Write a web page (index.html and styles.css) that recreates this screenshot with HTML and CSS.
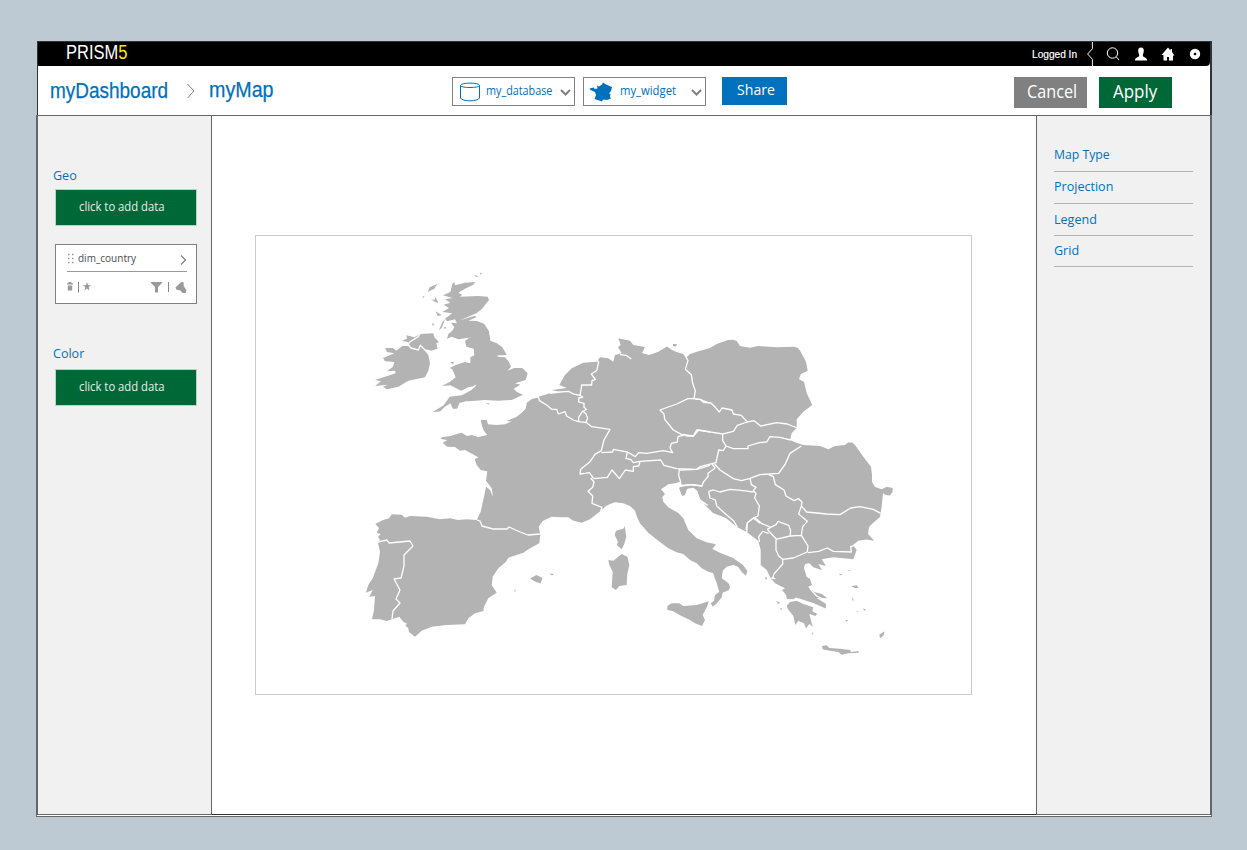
FILE: index.html
```html
<!DOCTYPE html>
<html lang="en">
<head>
<meta charset="utf-8">
<title>PRISM5 – myMap</title>
<link rel="stylesheet" href="styles.css">
</head>
<body>
<div class="window">
  <div class="head">
    <div class="topbar">
      <div class="logo"><span class="fit fit-logo">PRISM<b>5</b></span></div>
      <div class="user">
        <span class="logged"><span class="fit fit-logged">Logged In</span></span>
        <svg class="notch" width="10" height="25" viewBox="0 0 10 25"><path d="M7.500 0V7L2.500 12.500L7.500 18V25" fill="none" stroke="#fff"/></svg>
        <svg class="ico-search" width="16" height="16" viewBox="0 0 16 16"><circle cx="7.500" cy="7" r="5.200" fill="none" stroke="#fff"/><path d="M11.300 10.800L14 14" stroke="#fff"/></svg>
        <svg class="ico-user" width="14" height="14" viewBox="0 0 14 14"><path d="M7 .5C5 .5 4 2 4.200 4C4.300 6 5.200 7 5.200 8.500C5 10.500 1 10 1 13.500H13C13 10 9 10.500 8.800 8.500C8.800 7 9.700 6 9.800 4C10 2 9 .5 7 .5Z" fill="#fff"/></svg>
        <svg class="ico-home" width="14" height="14" viewBox="0 0 14 14"><path d="M7 .5L.5 8H2.500V13.500H6V10H8V13.500H12V8.500H13.500L11 5V2H9.500V3.500Z" fill="#fff"/></svg>
        <svg class="ico-gear" width="12" height="12" viewBox="0 0 12 12"><circle cx="6" cy="6" r="5.200" fill="#fff"/><circle cx="6" cy="6" r="1.300"/></svg>
      </div>
    </div>
    <div class="toolbar">
      <div class="crumb crumb-a"><span class="fit fit-dash">myDashboard</span></div>
      <svg class="crumb-sep" width="10" height="16" viewBox="0 0 10 16"><path d="M1.500 1L8 8L1.500 15" fill="none" stroke="#808080"/></svg>
      <div class="crumb crumb-b"><span class="fit fit-map">myMap</span></div>
      <div class="select">
        <svg class="sel-icon" width="22" height="20" viewBox="0 0 22 20"><path d="M1.500 3.500C1.500 .3 20.500 .3 20.500 3.500C20.500 6.200 1.500 6.200 1.500 3.500V16C3 19.800 19 19.800 20.500 16V3.500" fill="none" stroke="#0071bc"/></svg>
        <span class="sel-text"><span class="fit fit-db">my_database</span></span>
        <svg class="chev" width="11" height="9" viewBox="0 0 11 9"><path d="M1 2L5.500 6.500L10 2" fill="none" stroke="#808080" stroke-width="2"/></svg>
      </div>
      <div class="select select-w">
        <svg class="sel-icon sel-fr" width="24" height="20" viewBox="0 0 24 20"><path d="M.5 6.500L5 5.500L5.500 7L8.500 6.500L8 3.500L10 4.500L13 2.500L14 .5L17 2.500L23 5L22 9L20 11.500L21.500 12L21 15L22 16.500L18 18L14 17.500L13 19.500L10 18.500L5.500 17L7 13L6 10L1.500 8Z" fill="#0071bc"/></svg>
        <span class="sel-text"><span class="fit fit-wd">my_widget</span></span>
        <svg class="chev" width="11" height="9" viewBox="0 0 11 9"><path d="M1 2L5.500 6.500L10 2" fill="none" stroke="#808080" stroke-width="2"/></svg>
      </div>
      <div class="btn btn-share"><span class="fit fit-share">Share</span></div>
      <div class="btn btn-cancel"><span class="fit fit-cancel">Cancel</span></div>
      <div class="btn btn-apply"><span class="fit fit-apply">Apply</span></div>
    </div>
  </div>
  <div class="main">
    <aside class="left">
      <h2 class="label"><span class="fit fit-geo">Geo</span></h2>
      <div class="add"><span class="fit fit-add">click to add data</span></div>
      <div class="card">
        <div class="card-top">
          <svg width="8" height="11" viewBox="0 0 8 11"><path d="M1 1.500h1.500M5 1.500h1.500M1 5.500h1.500M5 5.500h1.500M1 9.500h1.500M5 9.500h1.500" stroke="#999" stroke-width="1.500"/></svg>
          <span class="dim"><span class="fit fit-dim">dim_country</span></span>
          <svg class="go" width="7" height="10" viewBox="0 0 7 10"><path d="M1 .5L5.500 5L1 9.500" fill="none" stroke="#808080" stroke-width="1.200"/></svg>
        </div>
        <div class="card-bottom">
          <svg width="120" height="14" viewBox="0 0 120 14"><g fill="#999"><path d="M0 3.500V2.300H1.500V1H4.500V2.300H6V3.500ZM.8 4.600H5.200V9.500H.8Z"/><path d="M20 1L21.100 4.200H24.200L21.700 6.100L22.600 9.400L20 7.500L17.400 9.400L18.300 6.100L15.800 4.200H18.900Z"/><path d="M84 1H95V2L91 6V11.500H88V6L84 2Z"/><path d="M108.500 6.500L114 1.200L116.500 1L116.700 5L119.500 9.500L118.500 12L115.500 12L113.500 9.500L109.500 8.800Z"/></g><path d="M11.500 1V11.500M101.500 1V11" stroke="#888"/></svg>
        </div>
      </div>
      <h2 class="label label-color"><span class="fit fit-color">Color</span></h2>
      <div class="add"><span class="fit fit-add">click to add data</span></div>
    </aside>
    <section class="stage">
      <div class="canvas">
        <svg class="map" width="715" height="458" viewBox="256 236 715 458">
          <g class="land">
            <path d="M538.300 396.700L538 397.500L532 399L527 402.500L525.500 409L522 412.500L516.700 416.700L506.700 421L511.700 421.500L505 424.300L496.700 425L488 424.300L486.700 420L480.700 420L482 426L484 431L487.300 435L483 436L478 437L471.700 435L467 436L461.700 432.700L456.700 434L450.700 436L441.700 437.300L441 439L447.300 440L442.700 442.700L447 446.700L455 447L460 450.700L465 450L470 452.700L478.300 457.300L474.700 459.300L476.700 465L480.700 470L487.300 471.300L486 480.700L491.700 488.300L493 496.700L490 490L486 486.700L484 496.700L480.700 511.700L476.700 520L466.700 519.300L458 520L450 518.300L440 519.300L426.700 516.700L410 516L405 517.700L401.700 514.700L391.700 514.300L389 518.300L383 520L375.300 524L379 528L376.700 532.700L380.700 534L378 537L380 540L378 543L380 551.700L378.300 563.300L372.700 578.300L368.300 585L366 592.700L372.700 590L369.300 596.700L375 596L374 610L372 619.300L380 619.300L386.700 621L395 618.300L399.300 616.700L403.300 621.700L407.300 624L405 625L408.300 628.300L409 632L415 636.700L421.700 630.700L431.700 626.700L446.700 625L465 624.300L468.300 618.300L475 613.300L483.300 611L484 606.700L488.300 598.300L496.700 592.700L491.700 585L492.700 576.700L498.300 568.300L506 561.700L508.300 557.700L523.300 552.700L530 548.300L539.300 543.300L540.300 535L538.700 526.700L542.700 521L551.700 516.700L561.700 517.300L568.300 517.300L573.300 520.700L581.700 522.700L590 519.300L601.700 510L606 506L610 504L615 502.300L623.300 503.300L630 506L635 510.700L637 517L640 523.300L648.300 532.700L658.300 540.700L668.300 548.300L676.700 552.300L683.300 554L690 560L696.700 563.300L701.700 568.300L708.300 571.700L713 573L716.700 583.300L719.300 591.700L715 595L714 600.700L710.700 603.300L712.700 606.700L716.700 603.500L721.700 597.300L722.700 592.700L729 590L730 587.300L728.300 583L721.700 578.300L722.700 570.700L726.700 566.700L733.300 565L738.300 567L741.700 572L746 575.700L747.300 571L743 565L733 558L720 552.700L712.300 549L716 544.300L706.700 542.300L696.700 538.300L688.300 530L683.300 518.300L678.300 513L668.300 507.300L663.300 501.700L662.300 497L665 494L661 489.300L668.300 484.300L675 483.300L681 481.700L682 486L679 488L682 496L685 495L687 489L693.300 487.700L697.300 490.700L700 499L705 505L713 513L726 518L736.700 527L746.700 532L758.300 541L760.700 550L760.700 565L766.700 570L770.700 578.300L775 583.300L785 588.300L782 590L786 595L787 599L793 599.500L796 597.500L803 600L813.300 603L820 606L825.700 608.500L826 604L816.700 598L827.300 598.300L822 594L814 592L808 587L812 585L810 579L806.700 576.700L804 568L805 564L809.300 563.300L813.300 567.300L822 570L818.300 564L826 566L821.700 559.300L833.300 557.300L843.300 558.300L853.300 559.300L856.700 550L853 545L858.300 540.700L866.700 539.500L874.300 540.700L868 534L869 527L872.700 523.300L880 517L881.700 506.700L883 493.300L886 495L890 495.500L892.500 492L892.700 488L886.700 486.700L881.700 489.300L875 487L872 482L872 475L871 466.700L863.300 456.700L855 445L852.500 442.500L848 442.500L845 445L835 446L828.300 449.300L820 446L803.300 445L797 443L790 440L791.700 433.300L796.700 427.700L796.700 419.300L803.300 411.700L812.300 405L806.700 393.300L804 381.700L799 379.300L800.700 374.300L807.700 370.700L806 361.700L800.700 351.700L798 348L794 346.700L776.700 347.300L758.300 346L750 347.700L740 346L736.700 341L733 339.700L728 340L716.700 344L710 348L696.700 351.700L690 354L686.700 357.300L683 354L676.700 352L672 350L667 346.500L658.300 351.700L649 355L642 353L645 347L633.300 345L630 340.700L618.300 338.300L620.700 345L618 347L621.700 353.300L615 355L613.300 361.700L608.300 358.300L600 357.300L596.700 361.700L583.300 362.700L571.700 368.300L565 375L559.300 385L566.700 388L551.700 390L560 392L550 393.300Z"/>
            <path d="M673 344L677 344L676 346.500L673 346ZM530 578.500L536.500 575L542.500 578L540.500 583.500L535 581.500ZM549 573.500L554 574L552 575.500ZM514 591L516 589L515 592Z"/>
          </g>
          <g class="land" transform="translate(580 450) scale(.33333)">
            <path d="M134 228L139 260L132 284L125 298L110 285L114 276L104 255L108 242L130 236ZM85 330L100 332L125 312L142 320L148 345L142 372L140 405L118 408L108 420L95 412L98 365L88 345Z"/>
            <path d="M262 468L275 460L298 460L310 468L350 465L386 454L382 468L368 495L375 510L366 528L345 520L330 510L300 496L280 484L262 480Z"/>
          </g>
          <g class="land" transform="translate(730 470) scale(.33333)">
            <path d="M170 408L180 396L200 392L220 402L250 412L247 424L262 432L256 438L238 432L248 470L238 462L228 475L222 460L205 452L196 465L190 438L174 418Z"/>
            <path d="M276 528L290 526L298 534L330 536L360 540L364 546L386 543L386 548L355 550L335 554L325 546L300 542L278 538ZM448 494L464 484L460 498L450 504ZM364 348L380 346L386 354L374 354ZM366 380L371 388L369 396ZM398 416L408 418L404 422ZM326 312L338 312L332 316ZM354 300L362 302L356 304ZM138 392L150 398L144 402ZM150 414L157 416L154 420ZM104 320L112 324L108 330ZM346 450L354 450L350 456ZM246 486L250 492L246 494ZM380 422L386 424L380 426Z"/>
          </g>
          <g class="land" transform="translate(365 270) scale(.33333)">
            <path d="M262 42L268 36L270 46L300 38L331 36L325 44L300 56L280 68L292 74L284 80L340 78L368 80L372 90L350 118L334 130L296 146L280 152L330 137L334 142L310 152L336 153L358 162L372 184L376 212L396 220L412 232L425 254L400 258L420 262L432 276L438 290L428 302L448 294L472 294L488 310L482 330L450 340L466 344L446 356L456 366L474 374L440 390L400 392L360 390L310 394L284 398L276 416L264 416L256 400L238 412L226 424L202 427L236 406L254 380L290 376L316 362L330 348L310 352L288 362L256 346L230 348L254 336L272 322L262 298L254 294L274 284L300 276L316 280L316 262L328 256L326 236L304 230L300 212L312 204L322 202L280 208L260 200L246 206L250 192L262 182L268 172L258 158L276 160L270 148L246 154L240 146L262 130L232 126L252 114L236 104L256 98L240 88L262 84L234 76L256 66Z"/>
            <path d="M148 202L166 192L205 190L208 202L222 216L214 220L218 236L196 243L178 240L190 256L195 280L190 302L180 322L130 332L100 350L66 358L54 350L68 344L30 348L48 334L30 330L60 320L92 310L90 302L66 304L84 290L88 276L60 274L54 264L88 250L66 246L60 234L84 234L94 242L112 228L134 228L128 216L110 212L126 206L124 196Z"/>
            <path d="M188 66L194 52L217 41L208 56ZM198 88L208 90L212 82L220 98L210 96ZM212 124L230 136L218 138ZM222 180L232 156L240 148L230 174ZM254 276L268 276L264 282ZM328 16L340 18L334 22ZM345 8L352 10L346 14ZM200 160L208 162L204 168ZM172 80L178 78L176 84ZM364 400L374 400L370 404ZM236 170L244 172L240 178Z"/>
          </g>
          <g class="borders" transform="translate(365 270) scale(.33333)">
            <path d="M134 216Q126 224 138 234L160 240L166 226L180 240L196 243M134 216L160 200L166 188"/>
            <path d="M316 360L332 346M398 258L424 260M288 402L306 394"/>
          </g>
          <g class="borders" transform="translate(530 330) scale(.33333)">
            <path d="M25 198L28 212L50 225L65 238L80 238L85 252L105 245L110 258L130 270L145 275L170 278L185 290L205 293L240 298L222 330L214 362L195 373L180 395L152 418L150 432L165 430L178 428L190 444"/>
            <path d="M60 190L90 186L116 184L130 192L150 196L153 180L155 165L185 165L186 152L196 148L184 132L200 122L206 96L198 88"/>
            <path d="M150 196L158 202L146 204L146 216L162 220L162 232L169 238L156 246L146 262L146 274M160 244L168 252L173 264L168 277"/>
            <path d="M270 74L288 76L304 87M462 70L474 92L466 118L484 134L488 160L496 182L492 206L474 206L440 222L390 240L402 252L404 268L430 300L460 316L444 320L442 336L424 340L420 354L428 368L400 362L350 370L326 368L316 380L292 366L250 358L248 366L214 368"/>
            <path d="M492 206L510 208L540 220M460 314L490 318L506 300L540 306M292 366L288 386L302 388L310 398L330 394L392 390L402 406L440 416L500 418L540 406M330 396L326 408L310 410L310 424L286 420L268 446L246 420L232 442L190 446"/>
          </g>
          <g class="borders" transform="translate(680 330) scale(.33333)">
            <path d="M46 208L60 208L72 218L92 218L106 232L118 246L126 234L156 240L160 252L184 256L202 276L222 272L242 288L290 278L322 282L352 294M10 312L20 318L40 318L50 300L80 304L128 312L160 304L172 286L202 276M128 312L128 332L138 348L160 356L204 356L204 348L238 338L260 336L270 320L300 322L332 330M138 348L130 362L116 360L108 398L60 410L50 418L0 420M104 402L120 420L160 446L184 452L208 446L240 434L296 430L316 402L330 370L364 348"/>
            <path d="M106 414L84 430L84 440L70 456L66 468L30 464L6 468L-10 470M96 402L106 414"/>
          </g>
          <g class="borders" transform="translate(580 450) scale(.33333)">
            <path d="M32 84L42 96L38 112L24 124L38 138L36 160L66 172L62 184M298 56L296 76L302 96M304 106L340 104L366 108M510 84L514 104L528 112L520 122L528 130L524 144L538 168L534 198L520 204L502 218L498 240"/>
            <path d="M386 124L400 120L420 126L450 118L490 122L520 126M386 124L390 144L406 150L410 168L430 186L462 214L472 232M520 204L540 220"/>
            <path d="M320 130L328 116M346 122L360 150L382 165L352 150M390 192L430 210M416 205L456 224"/>
          </g>
          <g class="borders" transform="translate(730 470) scale(.33333)">
            <path d="M116 14L130 20L136 44L162 60L168 78L192 92L206 86L216 96L214 108L230 126L290 132L330 134L362 114L390 110L430 118L452 130M214 108L206 132L232 154L218 170L214 196L180 198L138 208L138 240L146 258L158 268L190 264L232 246L234 228L214 196M234 248L266 244L292 234L310 244L364 246L362 230L380 224M158 268L158 282L132 312L128 324M74 142L94 160L122 172L138 164L144 154L176 166L182 182L180 198M112 178L130 198L140 208M112 178L122 172M74 142L52 158L50 188M88 216L86 200L98 184L116 190"/>
            <path d="M164 392L210 388L250 402L286 422M240 356L260 378L290 392M124 324L136 326"/>
          </g>
          <path class="borders" d="M477 520L480 521L482 526L493 529L507 529L509 527L520 532L528 535L540 534M378 542L387 540L389 543L410 541L413 546L404 555L404 566L401 578L394 579L400 590L396 599L400 603L393 611L392 619"/>
        </svg>
      </div>
    </section>
    <aside class="right">
      <ul class="opts">
        <li><span class="fit fit-mt">Map Type</span></li>
        <li class="o2"><span class="fit fit-pr">Projection</span></li>
        <li><span class="fit fit-lg">Legend</span></li>
        <li class="o4"><span class="fit fit-gr">Grid</span></li>
      </ul>
    </aside>
  </div>
</div>
</body>
</html>
```
FILE: styles.css
```css
* { box-sizing: border-box; }
body { margin: 0; padding: 41px 35px 0 36px; height: 850px; overflow: hidden; background: #bdcad3; font-family: "Open Sans", "Noto Sans", sans-serif; font-weight: 500; }
svg { display: block; flex: none; }
.window { width: 1176px; height: 776px; }
.fit { display: inline-block; white-space: nowrap; transform-origin: 0 50%; }

.head { margin-left: 1px; width: 1175px; height: 74px; border: 1px solid #333; border-width: 1px 2px 0 1px; background: #fff; }
.topbar { height: 24px; display: flex; justify-content: space-between; background: #000; border-radius: 0 0 4px 0; color: #fff; font-family: "Liberation Sans", Arial, sans-serif; }
.logo { padding-left: 28px; font-size: 19.500px; line-height: 20px; }
.logo b { font-weight: 400; color: #f5ea14; }
.user { width: 178px; display: flex; align-items: center; }
.logged { width: 53px; font-size: 11px; line-height: 24px; -webkit-text-stroke: .2px #fff; }
.notch { height: 24px; }
.ico-search { margin-left: 10px; }
.ico-user { margin-left: 13px; }
.ico-home { margin-left: 13px; }
.ico-gear { margin-left: 14px; }

.toolbar { height: 49px; display: flex; align-items: flex-start; }
.crumb { color: #0071bc; font: 22px/28px "Liberation Sans", Arial, sans-serif; -webkit-text-stroke: .25px #0071bc; }
.crumb-a { margin: 11px 0 0 12px; width: 136px; }
.crumb-sep { margin-top: 17px; }
.crumb-b { margin: 10px 0 0 13px; width: 243px; }
.select { margin-top: 11px; width: 123px; height: 29px; border: 1px solid #808080; display: flex; color: #0071bc; font-size: 12px; line-height: 26px; }
.select-w { margin-left: 8px; line-height: 25px; }
.sel-icon { margin: 4px 5px 0 6px; }
.sel-fr { margin: 4px 7px 0 5px; }
.sel-text { width: 74px; }
.select-w .sel-text { width: 71px; }
.chev { margin-top: 10px; }
.btn { color: #fff; }
.btn-share { margin: 11px 0 0 16px; width: 65px; height: 28px; padding-left: 15px; background: #0071bc; font-size: 15px; line-height: 25px; }
.btn-cancel { margin: 11px 0 0 227px; width: 73px; height: 31px; padding-left: 13px; background: #808080; font-size: 18px; line-height: 29px; }
.btn-apply { margin: 11px 0 0 12px; width: 73px; height: 31px; padding-left: 14px; background: #006837; font-size: 18px; line-height: 29px; }

.main { height: 702px; display: flex; background: #fff; border: 1px solid #666; padding-bottom: 1px; }
.left { width: 175px; border: 1px solid #666; border-width: 0 1px 1px 1px; background: #f1f1f1; padding: 49px 0 0 15px; }
.label { margin: 0; color: #0071bc; font-weight: 500; font-size: 13px; line-height: 20px; height: 24px; }
.add { margin-left: 2px; width: 142px; height: 37px; padding-left: 23px; border: 1px solid #bfcfc5; background: #006837; color: #e4efe9; font-size: 12px; line-height: 33px; }
.card { margin: 18px 0 0 2px; width: 142px; height: 60px; border: 1px solid #808080; background: #fff; padding: 0 9px 0 11px; }
.card-top { height: 27px; display: flex; align-items: center; border-bottom: 1px solid #999; color: #4d4d4d; font-size: 11px; line-height: 25px; }
.card-top .dim { margin-left: 3px; width: 102px; height: 27px; }
.go { margin-top: 3px; }
.card-bottom { padding-top: 9px; }
.label-color { margin-top: 39px; height: 26px; }
.stage { width: 824px; padding: 119px 0 0 43px; border-bottom: 1px solid #333; }
.canvas { width: 717px; height: 460px; border: 1px solid #ccc; background: #fff; }
.land { fill: #b3b3b3; }
.borders { fill: none; stroke: #fff; stroke-width: 3.900; stroke-linejoin: round; }
path.borders { stroke-width: 1.300; }
.right { width: 175px; border: 1px solid #666; border-width: 0 1px 1px 1px; background: #f1f1f1; padding: 23px 17px 0; }
.opts { list-style: none; margin: 0; padding: 0; color: #0071bc; font-size: 13px; }
.opts li { height: 32px; line-height: 30px; border-bottom: 1px solid #b3b3b3; }
.opts li:first-child { height: 33px; line-height: 31px; }
.opts .o2 { line-height: 28px; }
.opts .o4 { height: 31px; line-height: 29px; }

.fit-logo { transform: scaleX(.845); }
.fit-logged { transform: scaleX(.92); }
.fit-dash { transform: scaleX(.862); }
.fit-map { transform: scaleX(.895); }
.fit-db { transform: scaleX(.9); }
.fit-wd { transform: scaleX(.94); }
.fit-share, .fit-apply { transform: scaleX(.94); }
.fit-cancel { transform: scaleX(.9); }
.fit-add { transform: scaleX(.94); }
.fit-dim { transform: scaleX(.91); }
.fit-mt { transform: scaleX(.94); }
.fit-geo, .fit-color, .fit-pr, .fit-lg, .fit-gr { transform: scaleX(.965); }
```
